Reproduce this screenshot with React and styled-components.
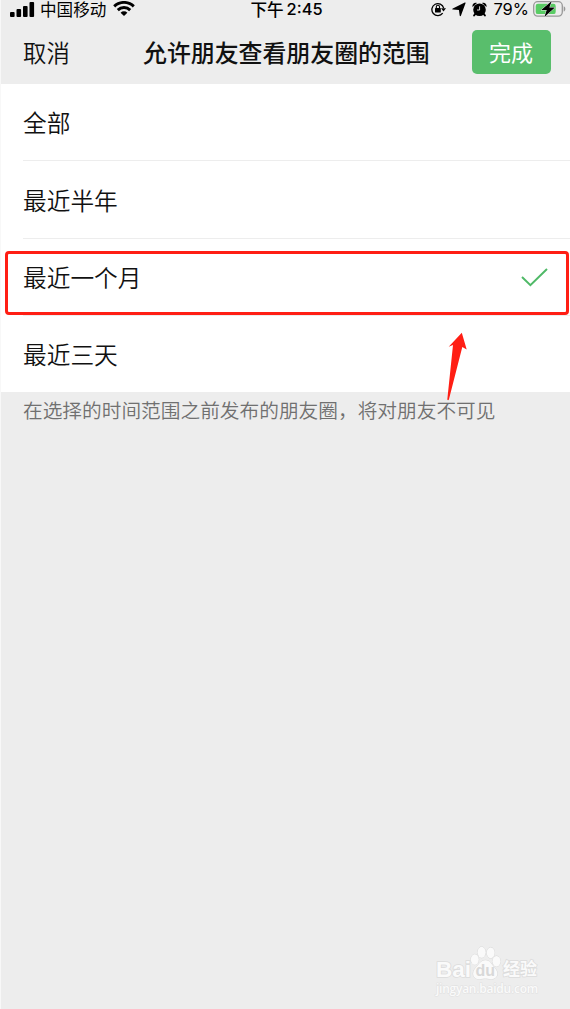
import React from 'react';
import styled, { createGlobalStyle } from 'styled-components';

const GlobalStyle = createGlobalStyle`
  * {
    box-sizing: border-box;
  }
  body {
    margin: 0;
    background: #ededed;
    font-family: 'Noto Sans CJK SC', sans-serif;
    color: #111;
  }
`;

const Screen = styled.div`
  position: relative;
  width: 570px;
  height: 1009px;
  overflow: hidden;
  background: #ededed;
  border-left: 1px solid #f8f8f8;
`;

const StatusBar = styled.div`
  display: grid;
  grid-template-columns: 1fr auto 1fr;
  align-items: center;
  height: 17px;
  padding: 0 4px 0 9px;
  font-family: 'Liberation Sans', 'Noto Sans CJK SC', sans-serif;
  font-size: 16.6px;
  line-height: 17px;
  color: #000;
  white-space: nowrap;
  svg {
    display: block;
    flex: none;
  }
`;

const StatusGroup = styled.div`
  display: flex;
  align-items: center;
  justify-content: ${(props) => (props.$end ? 'flex-end' : 'flex-start')};
`;

const StatusIcons = styled.div`
  display: flex;
  align-items: center;
  gap: 6px;
  padding-bottom: 1px;
`;

const Carrier = styled.span`
  margin: 0 7px 0 5px;
  padding-top: 1px;
`;

const Clock = styled.div`
  display: flex;
  align-items: center;
  gap: 3px;
  padding: 1px 3px 0 0;
  font-weight: 500;
  span {
    padding-bottom: 2px;
    font-family: Inter, sans-serif;
    font-size: 16.4px;
    line-height: 16px;
  }
`;

const Percent = styled.span`
  margin: 0 4px 0 6px;
  padding-bottom: 1px;
  font-family: Inter, sans-serif;
  font-size: 16.5px;
  line-height: 16px;
`;

const NavBar = styled.header`
  display: flex;
  align-items: center;
  justify-content: space-between;
  height: 67px;
  padding: 3px 19px 0 22px;
`;

const Cancel = styled.button`
  width: 120px;
  padding: 0 0 1px;
  border: 0;
  background: none;
  font: inherit;
  font-size: 23.4px;
  font-weight: 350;
  line-height: 34px;
  text-align: left;
  color: #111;
`;

const Title = styled.h1`
  flex: 1;
  margin: 0;
  font-size: 23.9px;
  font-weight: 500;
  line-height: 34px;
  white-space: nowrap;
`;

const Done = styled.button`
  width: 79px;
  height: 44px;
  padding: 0 1px 2px 0;
  border: 0;
  border-radius: 5px;
  background: #59be6c;
  font: inherit;
  font-size: 22px;
  line-height: 42px;
  color: #fff;
`;

const OptionList = styled.ul`
  margin: 0;
  padding: 0 0 0 22px;
  list-style: none;
  background: #fff;
`;

const Option = styled.li`
  display: flex;
  align-items: center;
  justify-content: space-between;
  height: 77.4px;
  padding: 0 22px 0 0;
  border-bottom: 1px solid #ededed;
  font-size: 23.7px;
  font-weight: 350;
  &:first-child {
    padding-bottom: 1px;
  }
  &:last-child {
    height: 76px;
    padding-bottom: 1px;
    border-bottom: 0;
  }
`;

const Hint = styled.p`
  margin: 0;
  padding: 3px 0 0 22px;
  font-size: 19.7px;
  font-weight: 350;
  line-height: 30px;
  color: #707070;
`;

/* marks drawn over the screen */
const Highlight = styled.div`
  position: absolute;
  top: 251px;
  left: 4px;
  width: 564px;
  height: 64px;
  border: 3px solid #ff1e14;
  border-radius: 4px;
`;

const Pointer = styled.svg`
  position: absolute;
  top: 332px;
  left: 444px;
`;

const Watermark = styled.div`
  position: absolute;
  top: 947px;
  left: 435px;
  color: #fafafa;
  paint-order: stroke fill;
  -webkit-text-stroke: 1.6px #dcdcdc;
  p {
    margin: 2px 0 0;
    font-family: 'Open Sans', sans-serif;
    font-size: 12px;
    font-weight: 600;
    line-height: 14px;
    letter-spacing: -0.25px;
    -webkit-text-stroke: 1px #e0e0e0;
  }
`;

const Brand = styled.div`
  display: flex;
  align-items: flex-end;
  height: 33px;
  font-family: 'Liberation Sans', 'Noto Sans CJK SC', sans-serif;
  font-size: 22.5px;
  font-weight: 700;
  line-height: 20px;
  svg {
    flex: none;
    margin: 0 2px 0 -1px;
  }
  span {
    font-size: 17px;
    line-height: 20px;
  }
`;

const PawText = styled.text`
  font-family: 'Liberation Sans', sans-serif;
  font-size: 16px;
  fill: #d8d8d8;
  -webkit-text-stroke: 0;
`;

const options = [
  { label: '全部' },
  { label: '最近半年' },
  { label: '最近一个月', checked: true },
  { label: '最近三天' },
];

const Signal = () => (
  <svg width="25" height="16" viewBox="0 0 25 16">
    <rect x="0" y="10" width="4.6" height="5" rx="1" />
    <rect x="6.5" y="7" width="4.6" height="8" rx="1" />
    <rect x="13" y="4" width="4.6" height="11" rx="1" />
    <rect x="19.5" y="0" width="4.6" height="15" rx="1" />
  </svg>
);

const Wifi = () => (
  <svg width="22" height="17" viewBox="0 0 22 17">
    <g fill="none" stroke="#000" strokeWidth="2.9">
      <path d="M1.2 5.4a14 14 0 0 1 19.6 0" />
      <path d="M4.8 9.1a8.8 8.8 0 0 1 12.4 0" />
    </g>
    <path d="M7.6 11.7a4.8 4.8 0 0 1 6.8 0L11 15.1z" />
  </svg>
);

const RotationLock = () => (
  <svg width="15" height="16" viewBox="0 0 15 16">
    <path d="M11.7 12.2a6 6 0 1 1 1-5.1" fill="none" stroke="#000" strokeWidth="1.3" />
    <path d="M10 7.2h5l-2.5 3.3z" />
    <rect x="4" y="7" width="5.8" height="4.5" rx=".6" />
    <path d="M5.3 7.2V5.8a1.6 1.6 0 0 1 3.2 0v1.4" fill="none" stroke="#000" strokeWidth="1.1" />
  </svg>
);

const Location = () => (
  <svg width="14" height="16" viewBox="0 0 14 16">
    <path d="M13.6 2 8.9 14.7c-.3.7-1.1.6-1.2-.2L6.9 9.1 1 8.6C.1 8.5.1 7.7.8 7.4L12.8 1.5c.6-.3 1 0 .8.5z" />
  </svg>
);

const Alarm = () => (
  <svg width="15" height="16" viewBox="0 0 15 16">
    <circle cx="7.5" cy="8.7" r="6.3" />
    <path d="M.6 6.1C-.2 3.2 2.1 1 5 2zM14.4 6.1c.8-2.9-1.5-5.1-4.4-4.1z" />
    <path d="m3.5 12.5-1.4 2M11.5 12.5l1.4 2" stroke="#000" strokeWidth="2" strokeLinecap="round" />
    <path d="M7.6 5.3V9H5" fill="none" stroke="#ededed" strokeWidth=".9" />
  </svg>
);

const Battery = () => (
  <svg width="33" height="17" viewBox="0 0 33 17">
    <rect x=".7" y=".7" width="28.6" height="14.4" rx="4" fill="none" stroke="#989898" strokeWidth="1.3" />
    <rect x="2.7" y="2.7" width="20" height="10.4" rx="2.2" fill="#59cc64" />
    <path d="M30.7 5.2c2.2.8 2.2 4.6 0 5.4z" fill="#989898" />
    <path
      d="M18.8 0 8.2 9h5.500l-2.300 7 10.500-9.500H16.300z"
      stroke="#ededed"
      strokeWidth="1"
      paintOrder="stroke"
    />
  </svg>
);

const Check = () => (
  <svg width="27" height="20" viewBox="0 0 27 20">
    <path d="m1 10 8.4 8.1L26 2" fill="none" stroke="#4fb967" strokeWidth="2" />
  </svg>
);

const Paw = () => (
  <svg width="31" height="34" viewBox="0 0 31 34">
    <g fill="#fafafa" stroke="#dadada" strokeWidth="1">
      <ellipse cx="4.8" cy="13.5" rx="3.9" ry="5.2" />
      <ellipse cx="11.6" cy="6.3" rx="4" ry="5.5" />
      <ellipse cx="20.700" cy="6.8" rx="3.9" ry="5.4" />
      <ellipse cx="26.500" cy="15.3" rx="4" ry="5.3" />
      <path d="M15.5 14.3c4.700 0 5.400 3.700 8.900 7.200 5.100 5 3.200 11.600-3.100 11.700-3 0-3.600-.7-6-.7s-3.500.7-6.200.7c-6.300 0-8-6.700-3.100-11.700 3-3.100 4.800-7.200 9.500-7.200z" />
    </g>
    <PawText x="15.3" y="30" textAnchor="middle">
      du
    </PawText>
  </svg>
);

export default function App() {
  return (
    <>
      <GlobalStyle />
      <Screen>
        <StatusBar>
          <StatusGroup>
            <Signal />
            <Carrier>中国移动</Carrier>
            <Wifi />
          </StatusGroup>
          <Clock>
            下午 <span>2:45</span>
          </Clock>
          <StatusGroup $end>
            <StatusIcons>
              <RotationLock />
              <Location />
              <Alarm />
            </StatusIcons>
            <Percent>79%</Percent>
            <Battery />
          </StatusGroup>
        </StatusBar>
        <NavBar>
          <Cancel>取消</Cancel>
          <Title>允许朋友查看朋友圈的范围</Title>
          <Done>完成</Done>
        </NavBar>
        <OptionList>
          {options.map((option) => (
            <Option key={option.label}>
              {option.label}
              {option.checked && <Check />}
            </Option>
          ))}
        </OptionList>
        <Hint>在选择的时间范围之前发布的朋友圈，将对朋友不可见</Hint>
        <Highlight />
        <Pointer width="24" height="72" viewBox="0 0 24 72">
          <path
            d="M16.8.7 21.7 17.4 17.3 15 3.9 67.5q-.9 1.5-1.6 0L8 13 3.7 14.8z"
            fill="#ff1e14"
          />
        </Pointer>
        <Watermark>
          <Brand>
            Bai
            <Paw />
            <span>经验</span>
          </Brand>
          <p>jingyan.baidu.com</p>
        </Watermark>
      </Screen>
    </>
  );
}
